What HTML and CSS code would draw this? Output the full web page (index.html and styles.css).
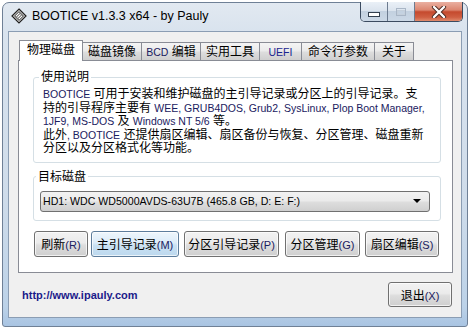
FILE: index.html
```html
<!DOCTYPE html>
<html>
<head>
  <meta charset="UTF-8">
  <title>BOOTICE v1.3.3 x64 - by Pauly</title>
  <link rel="stylesheet" href="styles.css">
</head>
<body>
  <div class="window">
    <div class="titlebar">
      <svg class="app-icon" viewBox="0 0 16 16" width="16" height="16">
        <polygon points="8,1 15,8 8,15 1,8" fill="#e4e4e4" stroke="#1e1e1e" stroke-width="1.2"/>
        <polygon points="8,3.5 12.5,8 8,12.5 3.5,8" fill="#9a9a9a" stroke="#303030" stroke-width="0.8"/>
        <line x1="5" y1="8" x2="8" y2="5" stroke="#fff" stroke-width="1"/>
        <line x1="6.5" y1="9.5" x2="9.5" y2="6.5" stroke="#fff" stroke-width="1"/>
        <line x1="8" y1="11" x2="11" y2="8" stroke="#fff" stroke-width="1"/>
      </svg>
      <span class="title">BOOTICE v1.3.3 x64 - by Pauly</span>
      <div class="caption-buttons">
        <div class="cap-btn cap-min">
          <svg viewBox="0 0 12 6" width="12" height="6"><rect x="0.5" y="0.5" width="11" height="4" fill="#fff" stroke="#33404f"/></svg>
        </div>
        <div class="cap-btn cap-max">
          <svg viewBox="0 0 12 10" width="12" height="10"><rect x="1.5" y="1.5" width="9" height="7" fill="none" stroke="#a9b6c6" stroke-width="1"/><rect x="2.5" y="3.5" width="7" height="4" fill="none" stroke="#c4cfdb" stroke-width="1"/></svg>
        </div>
        <div class="cap-btn cap-close">
          <svg viewBox="0 0 16 12" width="16" height="12">
            <path d="M3 1 L13 11 M13 1 L3 11" stroke="#4a2a22" stroke-width="4.2" stroke-linecap="round"/>
            <path d="M3 1 L13 11 M13 1 L3 11" stroke="#fff" stroke-width="2.4" stroke-linecap="round"/>
          </svg>
        </div>
      </div>
    </div>

    <div class="client">
      <div class="tabs">
        <div class="tab active">物理磁盘</div>
        <div class="tab w60">磁盘镜像</div>
        <div class="tab w60"><span class="en">BCD</span>&nbsp;编辑</div>
        <div class="tab w60">实用工具</div>
        <div class="tab w43"><span class="en uefi">UEFI</span></div>
        <div class="tab w74">命令行参数</div>
        <div class="tab w40">关于</div>
      </div>

      <div class="panel">
        <fieldset class="group">
          <legend>使用说明</legend>
          <div class="desc">
            <div><span class="en">BOOTICE</span> 可用于安装和维护磁盘的主引导记录或分区上的引导记录。支</div>
            <div>持的引导程序主要有 <span class="en">WEE, GRUB4DOS, Grub2, SysLinux, Plop Boot Manager,</span></div>
            <div><span class="en">1JF9, MS-DOS</span> 及 <span class="en">Windows NT 5/6</span> 等。</div>
            <div>此外<span class="en">, BOOTICE</span> 还提供扇区编辑、扇区备份与恢复、分区管理、磁盘重新</div>
            <div>分区以及分区格式化等功能。</div>
          </div>
        </fieldset>

        <fieldset class="group target">
          <legend>目标磁盘</legend>
          <div class="combo">
            <span class="en">HD1: WDC WD5000AVDS-63U7B (465.8 GB, D: E: F:)</span>
            <svg class="combo-arrow" viewBox="0 0 8 4" width="8" height="4"><polygon points="0,0 8,0 4,4" fill="#000"/></svg>
          </div>
        </fieldset>

        <div class="actions">
          <button class="btn b-refresh">刷新<span class="en">(R)</span></button>
          <button class="btn b-mbr default">主引导记录<span class="en">(M)</span></button>
          <button class="btn b-pbr">分区引导记录<span class="en">(P)</span></button>
          <button class="btn b-part">分区管理<span class="en">(G)</span></button>
          <button class="btn b-sector">扇区编辑<span class="en">(S)</span></button>
        </div>
      </div>

      <div class="footer">
        <span class="link">http://www.ipauly.com</span>
        <button class="btn b-exit">退出<span class="en">(X)</span></button>
      </div>
    </div>
  </div>
</body>
</html>
```

FILE: styles.css
```css
body {
  margin: 0;
  padding: 2px 0 0 2px;
  background: #fff;
  font-family: "Liberation Sans", "Noto Sans CJK SC", sans-serif;
  font-size: 12px;
  color: #000;
}

.window {
  width: 466px;
  height: 325px;
  box-sizing: border-box;
  border: 1px solid #6f8096;
  border-radius: 7px 7px 3px 3px;
  background: linear-gradient(180deg, #e2e9f1 0, #d9e3ee 28px, #cfdcea 60%, #bcd2e8 94%, #a9c4e2 100%);
  padding: 0 5px 8px 5px;
  display: flex;
  flex-direction: column;
}

/* title bar */

.titlebar {
  height: 28px;
  display: flex;
  align-items: flex-start;
}

.app-icon {
  margin: 5px 0 0 3px;
  flex: none;
}

.title {
  margin: 4px 0 0 5px;
  font-family: "Liberation Sans", sans-serif;
  font-size: 12.5px;
  line-height: 18px;
  color: #000;
  flex: 1;
}

.caption-buttons {
  display: flex;
  height: 19px;
  margin: -1px -1px 0 0;
  border: 1px solid #3b4b60;
  border-top: none;
  border-radius: 0 0 5px 5px;
  overflow: hidden;
}

.cap-btn {
  display: flex;
  align-items: center;
  justify-content: center;
}

.cap-min,
.cap-max {
  width: 26px;
  background: linear-gradient(180deg, #eaf0f7 0, #dbe4ee 45%, #c3d1e0 50%, #cbd8e6 100%);
  border-right: 1px solid #6c7b8f;
}

.cap-min svg {
  margin-top: 6px;
}

.cap-close {
  width: 47px;
  background: linear-gradient(180deg, #eab0a1 0, #dc8670 42%, #c54a2e 52%, #cf5f42 80%, #e08a6c 100%);
}

/* client area */

.client {
  flex: 1;
  border: 1px solid #8b9db3;
  background: #f0f0f0;
  padding: 8px 8px 0 9px;
  display: flex;
  flex-direction: column;
}

.tabs {
  display: flex;
  align-items: flex-end;
  height: 20px;
  padding-left: 1px;
}

.tab {
  box-sizing: border-box;
  height: 18px;
  margin-left: -1px;
  border: 1px solid #898c95;
  border-bottom: none;
  background: linear-gradient(180deg, #f4f4f4 0, #ebebeb 45%, #dddddd 55%, #cfcfcf 100%);
  display: flex;
  align-items: center;
  justify-content: center;
  white-space: nowrap;
  font-size: 12px;
  line-height: 16px;
}

.tab:first-child {
  margin-left: 0;
}

.tab.active {
  width: 64px;
  height: 21px;
  margin-bottom: -1px;
  padding-bottom: 2px;
  background: #fff;
  position: relative;
  z-index: 1;
}

.w60 { width: 60px; }
.w43 { width: 43px; }
.w74 { width: 74px; }
.w40 { width: 40px; }

.en {
  font-family: "Liberation Sans", sans-serif;
  font-size: 10.5px;
  color: #1a2060;
}

.uefi {
  color: #1a2590;
}

.panel {
  border: 1px solid #898c95;
  background: #fff;
  padding: 8px 11px 15px 14px;
}

.group {
  margin: 0;
  padding: 3px 9px 6px 9px;
  border: 1px solid #d5dfe5;
  border-radius: 3px;
}

.group legend {
  padding: 0 2px;
  margin-left: -4px;
  line-height: 16px;
}

.desc {
  line-height: 13.5px;
  white-space: nowrap;
}

.target {
  margin-top: 6px;
  padding: 6px 10px 8px 6px;
}

.combo {
  box-sizing: border-box;
  height: 21px;
  border: 1px solid #707070;
  border-radius: 3px;
  background: linear-gradient(180deg, #f2f2f2 0, #ebebeb 45%, #dddddd 55%, #cfcfcf 100%);
  display: flex;
  align-items: center;
  justify-content: space-between;
  padding: 0 8px 0 2px;
}

.combo .en {
  font-size: 10.6px;
  color: #000;
}

.actions {
  display: flex;
  margin-top: 10px;
  padding-left: 1px;
}

.btn {
  box-sizing: border-box;
  height: 26px;
  margin: 0;
  padding: 0;
  border: 1px solid #707070;
  border-radius: 3px;
  background: linear-gradient(180deg, #f2f2f2 0, #ebebeb 45%, #dddddd 55%, #cfcfcf 100%);
  font-family: "Liberation Sans", "Noto Sans CJK SC", sans-serif;
  font-size: 12px;
  color: #000;
  box-shadow: inset 0 0 0 1px rgba(255, 255, 255, 0.7);
}

.btn .en {
  font-size: 11px;
}

.btn.default {
  border-color: #5d7d9c;
  background: linear-gradient(180deg, #eef6fc 0, #dcecf9 45%, #c9e1f3 55%, #bcd8ee 100%);
}

.b-refresh { width: 54px; }
.b-mbr { width: 88px; margin-left: 3px; }
.b-pbr { width: 95px; margin-left: 5px; }
.b-part { width: 75px; margin-left: 6px; }
.b-sector { width: 74px; margin-left: 5px; }

.footer {
  flex: 1;
  display: flex;
  align-items: center;
  justify-content: space-between;
  padding: 0 1px 0 4px;
}

.link {
  font-family: "Liberation Sans", sans-serif;
  font-size: 11px;
  font-weight: bold;
  color: #1b1b8a;
}

.b-exit {
  width: 64px;
  height: 25px;
}
```
